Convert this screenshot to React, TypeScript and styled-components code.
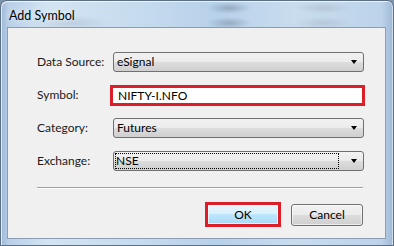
import * as React from "react";
import styled, { createGlobalStyle } from "styled-components";

const GlobalStyle = createGlobalStyle`
  html, body {
    margin: 0;
    padding: 0;
    width: 394px;
    height: 246px;
    overflow: hidden;
    background: #7d93ab;
  }
  * { box-sizing: border-box; }
`;

const Window = styled.div`
  width: 394px;
  height: 246px;
  display: flex;
  flex-direction: column;
  padding: 0 7px 6px 6px;
  border: 1px solid #5b6f86;
  border-radius: 7px 7px 0 0;
  background:
    radial-gradient(ellipse 22px 6px at 228px 7px, rgba(120,140,160,0.55), transparent),
    radial-gradient(ellipse 22px 6px at 228px 22px, rgba(120,140,160,0.55), transparent),
    radial-gradient(ellipse 28px 6px at 322px 7px, rgba(170,185,200,0.55), transparent),
    radial-gradient(ellipse 28px 6px at 322px 22px, rgba(170,185,200,0.55), transparent),
    radial-gradient(ellipse 40px 8px at 70px 22px, rgba(150,170,190,0.35), transparent),
    linear-gradient(90deg, #9fb9d6 0%, #b9d0e8 2%, #d3e4f3 12%, #c6dbee 35%, #b7d1ea 55%, #c9dcee 75%, #bcd3ea 97%, #9fb9d6 100%);
  box-shadow: inset 1px 1px 0 rgba(255,255,255,0.7), inset -1px 0 0 rgba(255,255,255,0.5);
  font-family: Lato, "Noto Sans", sans-serif;
  font-size: 12px;
  color: #000;
`;

const TitleBar = styled.div`
  height: 26px;
  display: flex;
  align-items: center;
  padding-left: 2px;
  padding-top: 2px;
  font-size: 12.5px;
  color: #000;
  text-shadow: 0 0 6px rgba(255,255,255,0.9);
`;

const Client = styled.div`
  flex: 1;
  display: flex;
  flex-direction: column;
  background: #f0f0f0;
  border: 1px solid #8a9db3;
  padding: 24px 21px 0 29px;
`;

const Form = styled.div`
  display: grid;
  grid-template-columns: 76px 251px;
  grid-auto-rows: 20px;
  row-gap: 13px;
  align-items: center;
`;

const Label = styled.div`
  line-height: 20px;
  white-space: nowrap;
  color: #1a1a1a;
`;

const Combo = styled.div<{ focused?: boolean }>`
  height: 20px;
  display: flex;
  align-items: center;
  justify-content: space-between;
  border: 1px solid #707070;
  border-radius: 3px;
  background: linear-gradient(#f2f2f2 0%, #ebebeb 50%, #dddddd 50%, #cfcfcf 100%);
  padding: 0 6px 0 ${({ focused }) => (focused ? 2 : 3)}px;
`;

const ComboText = styled.span<{ focused?: boolean }>`
  flex: 1;
  height: 14px;
  line-height: 14px;
  margin-right: 8px;
  outline: ${({ focused }) => (focused ? "1px dotted #000" : "none")};
  outline-offset: 0;
`;

const ArrowSep = styled.span`
  width: 1px;
  height: 14px;
  margin-right: 4px;
`;

const Arrow = styled.span`
  width: 0;
  height: 0;
  border-left: 3.5px solid transparent;
  border-right: 3.5px solid transparent;
  border-top: 4px solid #000;
`;

const Highlight = styled.div`
  height: 21px;
  margin-left: -3px;
  width: 255px;
  border: 3px solid #dc1e28;
  background: #fff;
  display: flex;
  align-items: center;
  padding-left: 5px;
`;

const Separator = styled.div`
  margin-top: 16px;
  height: 2px;
  width: 326px;
  border-top: 1px solid #a0a0a0;
  border-bottom: 1px solid #ffffff;
`;

const ButtonRow = styled.div`
  display: flex;
  justify-content: flex-end;
  align-items: center;
  gap: 10px;
  margin-top: 13px;
  padding-right: 1px;
`;

const Button = styled.div<{ primary?: boolean }>`
  display: flex;
  align-items: center;
  justify-content: center;
  width: ${({ primary }) => (primary ? 76 : 72)}px;
  height: ${({ primary }) => (primary ? 25 : 22)}px;
  border: ${({ primary }) => (primary ? "3px solid #dc1e28" : "1px solid #707070")};
  border-radius: ${({ primary }) => (primary ? 0 : 3)}px;
  background: ${({ primary }) =>
    primary
      ? "linear-gradient(#eaf6fd 0%, #d9f0fc 50%, #bee6fd 50%, #a7d9f5 100%)"
      : "linear-gradient(#f2f2f2 0%, #ebebeb 50%, #dddddd 50%, #cfcfcf 100%)"};
  box-shadow: inset 0 0 0 1px rgba(255,255,255,0.6);
`;

function Select({ value, focused }: { value: string; focused?: boolean }) {
  return (
    <Combo focused={focused}>
      <ComboText focused={focused}>{value}</ComboText>
      <ArrowSep />
      <Arrow />
    </Combo>
  );
}

export default function App() {
  return (
    <>
      <GlobalStyle />
      <Window>
        <TitleBar>Add Symbol</TitleBar>
        <Client>
          <Form>
            <Label>Data Source:</Label>
            <Select value="eSignal" />
            <Label>Symbol:</Label>
            <Highlight>NIFTY-I.NFO</Highlight>
            <Label>Category:</Label>
            <Select value="Futures" />
            <Label>Exchange:</Label>
            <Select value="NSE" focused />
          </Form>
          <Separator />
          <ButtonRow>
            <Button primary>OK</Button>
            <Button>Cancel</Button>
          </ButtonRow>
        </Client>
      </Window>
    </>
  );
}
